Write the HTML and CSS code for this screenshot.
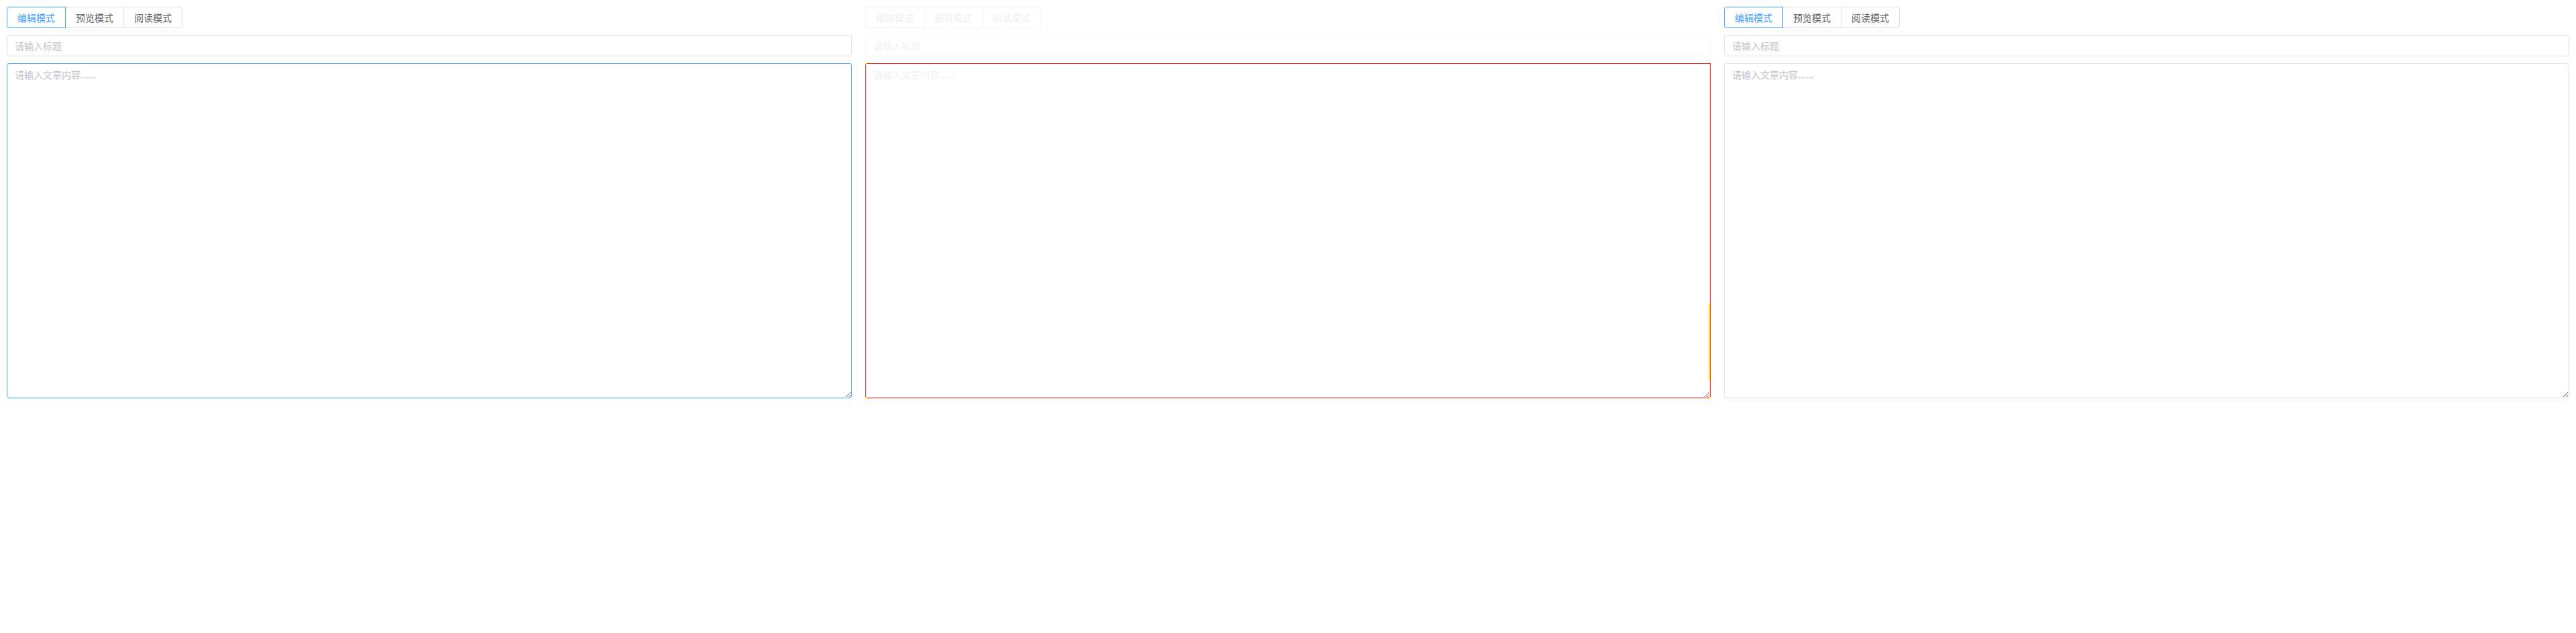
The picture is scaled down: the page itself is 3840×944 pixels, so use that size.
FILE: index.html
```html
<!DOCTYPE html>
<html lang="zh">
<head>
<meta charset="utf-8">
<title>Editor</title>
<link rel="stylesheet" href="styles.css">
</head>
<body>
<div class="page">
  <div class="col">
    <div class="btn-group">
      <button class="btn active">编辑模式</button>
      <button class="btn">预览模式</button>
      <button class="btn">阅读模式</button>
    </div>
    <input class="title" placeholder="请输入标题">
    <textarea class="content focused" placeholder="请输入文章内容......"></textarea>
  </div>
  <div class="col ghost">
    <div class="btn-group">
      <button class="btn active">编辑模式</button>
      <button class="btn">预览模式</button>
      <button class="btn">阅读模式</button>
    </div>
    <input class="title" placeholder="请输入标题">
    <div class="content-wrap">
      <textarea class="content marked" placeholder="请输入文章内容......"></textarea>
      <span class="mark mark-tl"></span>
      <span class="mark mark-bl"></span>
      <span class="mark mark-br"></span>
      <span class="mark mark-side"></span>
    </div>
  </div>
  <div class="col">
    <div class="btn-group">
      <button class="btn active">编辑模式</button>
      <button class="btn">预览模式</button>
      <button class="btn">阅读模式</button>
    </div>
    <input class="title" placeholder="请输入标题">
    <textarea class="content" placeholder="请输入文章内容......"></textarea>
  </div>
</div>
</body>
</html>
```

FILE: styles.css
```css
* { box-sizing: border-box; }
html, body { margin: 0; padding: 0; background: #fff; }
body {
  font-family: "Noto Sans CJK SC", "Noto Sans", sans-serif;
  font-size: 14px;
  color: #606266;
}
.page {
  display: grid;
  grid-template-columns: repeat(3, 1fr);
  width: 3840px;
}
.col {
  padding: 10px;
  display: flex;
  flex-direction: column;
}
.btn-group {
  display: flex;
  height: 32px;
  margin-bottom: 10px;
}
.btn {
  position: relative;
  width: 88px;
  height: 32px;
  padding: 0;
  margin: 0 0 0 -1px;
  border: 1px solid #dcdfe6;
  background: #fff;
  color: #606266;
  font-family: inherit;
  font-size: 14px;
  line-height: 30px;
  border-radius: 0;
}
.btn:first-child {
  margin-left: 0;
  border-radius: 4px 0 0 4px;
}
.btn:last-child { border-radius: 0 4px 4px 0; }
.btn.active {
  z-index: 1;
  border-color: #409eff;
  color: #409eff;
}
.title {
  height: 32px;
  width: 100%;
  border: 1px solid #dcdfe6;
  border-radius: 4px;
  padding: 0 11px;
  font-family: inherit;
  font-size: 14px;
  color: #606266;
  outline: none;
  margin-bottom: 10px;
}
.content {
  display: block;
  width: 100%;
  height: 500px;
  border: 1px solid #dcdfe6;
  border-radius: 4px;
  padding: 6px 11px;
  font-family: inherit;
  font-size: 14px;
  line-height: 1.5;
  color: #606266;
  outline: none;
  resize: both;
}
.content.focused { border-color: #409eff; }
::placeholder { color: #c0c4cc; }

.ghost .btn { border-color: #f5f5f6; color: #f0f0f0; }
.ghost .btn.active { border-color: #efefef; color: #f0f0f0; }
.ghost .title { border-color: #f7f7f8; }
.ghost ::placeholder { color: #f2f2f3; }

.content-wrap { position: relative; }
.content.marked { border-color: #ff0000; border-radius: 0; }
.mark { position: absolute; background: #ffff00; }
.mark-tl { left: 0; top: 0; width: 2px; height: 2px; }
.mark-bl { left: 0; bottom: 0; width: 2px; height: 2px; }
.mark-br { right: 0; bottom: 0; width: 2px; height: 2px; }
.mark-side { right: 1px; top: 359px; width: 2px; height: 115px; }
```
